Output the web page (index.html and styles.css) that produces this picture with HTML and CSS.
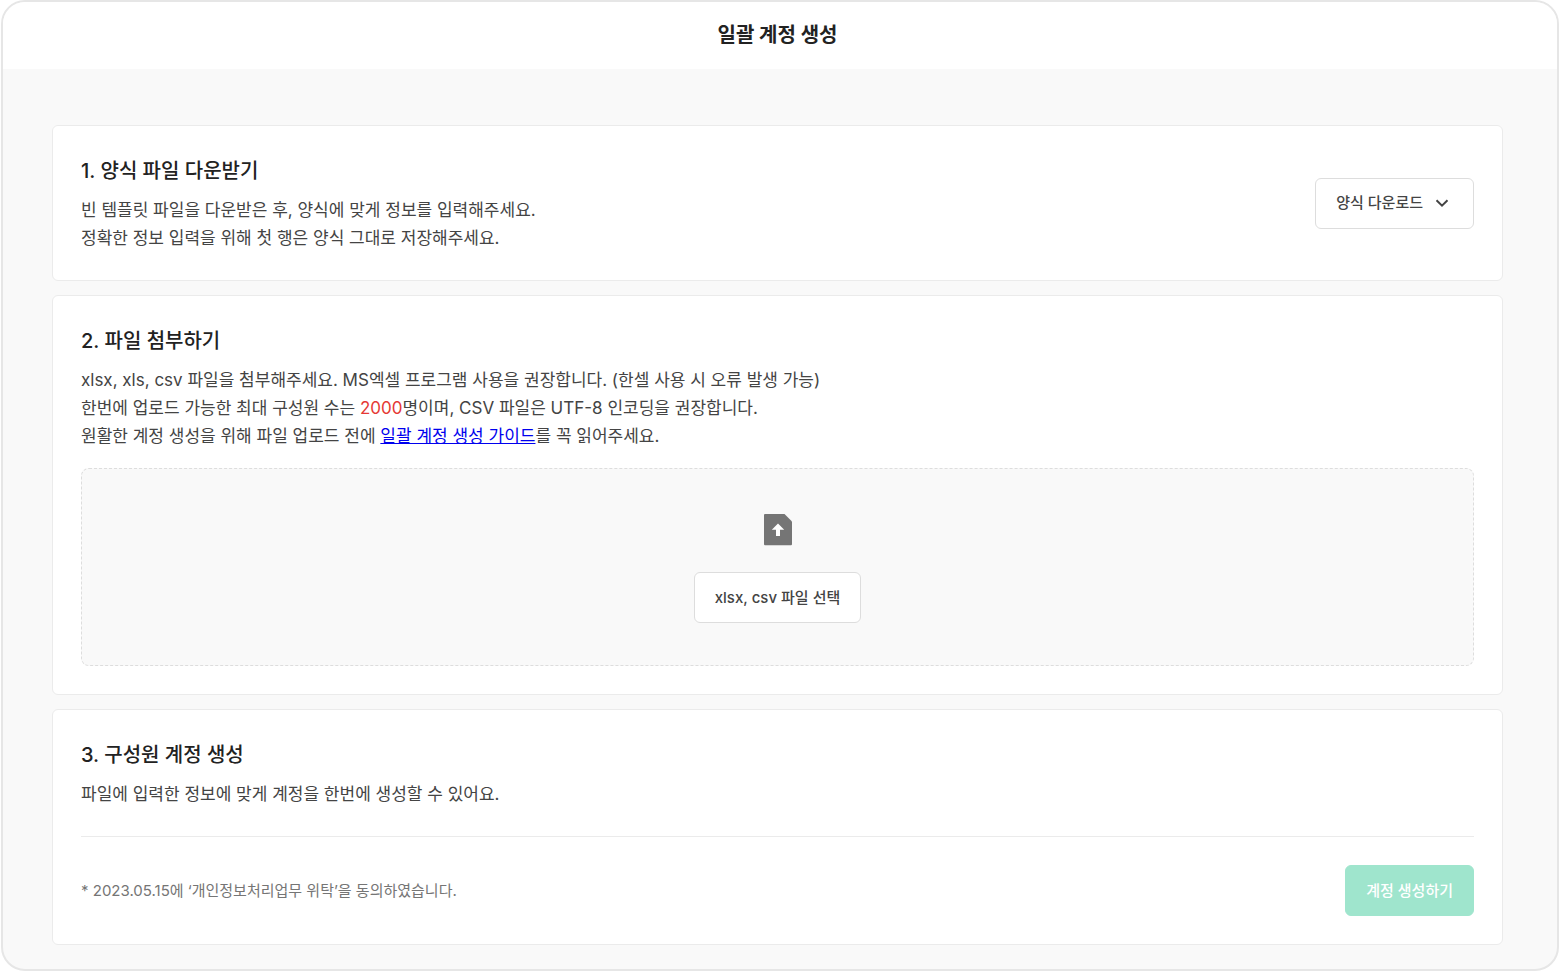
FILE: index.html
```html
<!DOCTYPE html>
<html lang="ko">
<head>
<meta charset="utf-8">
<meta name="viewport" content="width=device-width, initial-scale=1">
<title>일괄 계정 생성</title>
<link rel="stylesheet" href="styles.css">
</head>
<body>
<div class="window">
  <header class="topbar"><h1 class="page-title">일괄 계정 생성</h1></header>
  <main class="content">
    <section class="card card-row">
      <div>
        <h2 class="card-title">1. 양식 파일 다운받기</h2>
        <p class="desc">빈 템플릿 파일을 다운받은 후, 양식에 맞게 정보를 입력해주세요.<br>정확한 정보 입력을 위해 첫 행은 양식 그대로 저장해주세요.</p>
      </div>
      <button type="button" class="btn btn-menu">양식 다운로드
        <svg class="chevron" viewBox="0 0 14 14" aria-hidden="true"><path d="M1.500 4.200 7 9.700l5.500-5.500" fill="none" stroke="#444" stroke-width="2"/></svg>
      </button>
    </section>
    <section class="card">
      <h2 class="card-title">2. 파일 첨부하기</h2>
      <p class="desc">xlsx, xls, csv 파일을 첨부해주세요. MS엑셀 프로그램 사용을 권장합니다. (한셀 사용 시 오류 발생 가능)<br>한번에 업로드 가능한 최대 구성원 수는 <span class="limit">2000</span>명이며, CSV 파일은 UTF-8 인코딩을 권장합니다.<br>원활한 계정 생성을 위해 파일 업로드 전에 <a class="guide" href="#guide">일괄 계정 생성 가이드</a>를 꼭 읽어주세요.</p>
      <div class="dropzone">
        <svg class="file-icon" viewBox="0 0 28 32" aria-hidden="true"><path d="M1 0H20.500L28 7.500V30Q28 31.300 27 31.300H1Q0 31.300 0 30V1Q0 0 1 0Z" fill="#757575"/><path d="M14 9.500 20.200 15.800H16V22H12V15.800H7.800Z" fill="#fff"/></svg>
        <button type="button" class="btn">xlsx, csv 파일 선택</button>
      </div>
    </section>
    <section class="card">
      <h2 class="card-title">3. 구성원 계정 생성</h2>
      <p class="desc">파일에 입력한 정보에 맞게 계정을 한번에 생성할 수 있어요.</p>
      <div class="card-footer">
        <p class="note">* 2023.05.15에 ‘개인정보처리업무 위탁’을 동의하였습니다.</p>
        <button type="button" class="btn btn-primary" disabled>계정 생성하기</button>
      </div>
    </section>
  </main>
</div>
</body>
</html>
```
FILE: styles.css
```css
* { box-sizing: border-box; }
body {
  margin: 0;
  padding: 0 1px 1px;
  min-height: 100vh;
  display: flex;
  background: #fff;
  font-family: Inter, "Noto Sans CJK KR", sans-serif;
  color: #444;
}
h1, h2, p { margin: 0; }
.window {
  flex: 1;
  display: flex;
  flex-direction: column;
  border: 2px solid #e6e6e6;
  border-radius: 24px;
  overflow: hidden;
  background: #f9f9f9;
}
.topbar {
  padding: 19px 54px 20px 49px;
  background: #fff;
  text-align: center;
}
.page-title { font-size: 20px; line-height: 28px; font-weight: 700; color: #222; }
.content {
  display: flex;
  flex-direction: column;
  gap: 14px;
  padding: 56px 54px 24px 49px;
}
.card {
  padding: 28px;
  background: #fff;
  border: 1px solid #ebebeb;
  border-radius: 6px;
}
.card-row { display: flex; align-items: center; justify-content: space-between; }
.card-title { margin-bottom: 8px; font-size: 20px; line-height: 34px; font-weight: 500; color: #222; }
.desc { font-size: 17px; line-height: 28px; }
.limit { color: #e53935; }
.guide { color: #0000ee; text-decoration: underline; }
.btn {
  display: flex;
  align-items: center;
  height: 51px;
  padding: 0 20px;
  border: 1px solid #ddd;
  border-radius: 6px;
  background: #fff;
  color: #444;
  font: 500 15px/24px Inter, "Noto Sans CJK KR", sans-serif;
}
.btn-menu { gap: 12px; padding: 0 24px 0 20px; }
.chevron { width: 14px; height: 14px; }
.dropzone {
  display: flex;
  flex-direction: column;
  align-items: center;
  gap: 26px;
  margin-top: 18px;
  padding: 45px 20px 42px;
  border: 1px dashed #ddd;
  border-radius: 8px;
  background: #f9f9f9;
}
.file-icon { width: 28px; height: 32px; }
.card-footer {
  display: flex;
  align-items: center;
  justify-content: space-between;
  margin-top: 28px;
  padding-top: 28px;
  border-top: 1px solid #ebebeb;
}
.note { font-size: 15px; line-height: 24px; color: #757575; }
.btn-primary { border-color: #9fe5cd; background: #9fe5cd; color: #fff; }
```
